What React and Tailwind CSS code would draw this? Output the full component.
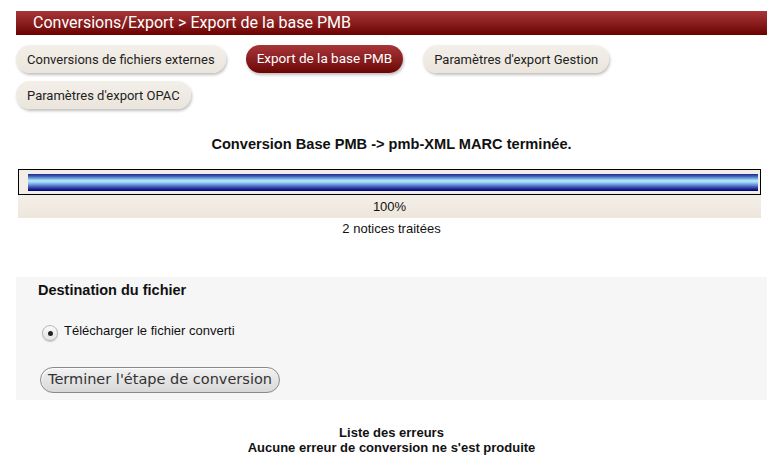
export default function App() {
  const tabBase =
    "h-[28px] rounded-full leading-none flex items-center shadow-[1px_2px_3px_rgba(0,0,0,0.25)]";
  const inactive = `${tabBase} px-[11px] text-[13px] bg-gradient-to-b from-[#f3efe9] to-[#ebe5dc] text-[#222]`;
  const active = `${tabBase} px-[11px] text-[13.5px] bg-gradient-to-b from-[#a7353a] to-[#6d0404] text-white`;
  return (
    <div className="w-[783px] h-[466px] bg-white font-['Liberation_Sans',Arial,sans-serif] text-[#111] overflow-hidden">
      <div className="mx-[16px] pt-[11px]">
        <div className="h-[24px] bg-gradient-to-b from-[#a83538] to-[#6b0000] flex items-center pl-[17px] text-white text-[16px] font-['Roboto',sans-serif]">
          Conversions/Export &gt; Export de la base PMB
        </div>
        <div className="flex flex-wrap gap-x-[20px] gap-y-[8px] mt-[10px] font-['Roboto',sans-serif] w-[746px]">
          <div className={inactive}>Conversions de fichiers externes</div>
          <div className={active}>Export de la base PMB</div>
          <div className={inactive}>Paramètres d'export Gestion</div>
          <div className={inactive}>Paramètres d'export OPAC</div>
        </div>
      </div>

      <div className="mt-[27px] text-center font-bold text-[14.6px] leading-[17px]">
        Conversion Base PMB -&gt; pmb-XML MARC terminée.
      </div>

      <div className="mx-[18px] w-[743px] mt-[16px]">
        <div className="h-[26px] border border-black bg-[#f2ede6] flex items-center pl-[9px] pr-[2px]">
          <div className="h-[17px] flex-1 bg-[linear-gradient(to_bottom,#1c2c8c_0%,#3c58b4_12%,#7ab0e4_28%,#b4ecf8_40%,#9cd0f0_50%,#6890d8_64%,#3850b0_78%,#14208c_90%,#000070_100%)]" />
        </div>
        <div className="h-[23px] bg-gradient-to-b from-[#f4efe8] to-[#ede6dd] flex items-center justify-center text-[13px]">
          100%
        </div>
      </div>
      <div className="text-center text-[13px] mt-[3px] leading-[15px]">2 notices traitées</div>

      <div className="mx-[16px] mt-[41px] h-[123px] bg-[#f6f6f6] pl-[22px] pt-[5px]">
        <div className="font-bold text-[14.5px] leading-[17px]">Destination du fichier</div>
        <div className="flex items-center mt-[26px] ml-[4px]">
          <div className="w-[16px] h-[16px] rounded-full border border-[#b8b8b8] bg-gradient-to-b from-[#fafafa] to-[#e4e4e4] shadow-[0_1px_1px_rgba(0,0,0,0.2)] flex items-center justify-center">
            <div className="w-[5px] h-[5px] rounded-full bg-[#222]" />
          </div>
          <span className="ml-[6px] text-[13px] leading-[14px] -mt-[4px]">Télécharger le fichier converti</span>
        </div>
        <div className="mt-[26px] ml-[2px] w-[240px] h-[26px] rounded-full border border-[#8a8a8a] bg-gradient-to-b from-[#f2f2f2] to-[#d8d8d8] shadow-[inset_1px_1px_1px_rgba(255,255,255,0.8)] flex items-center justify-center text-[14.5px] text-[#333] font-['DejaVu_Sans',sans-serif]">
          Terminer l'étape de conversion
        </div>
      </div>

      <div className="mt-[25px] text-center font-bold text-[13px] leading-[15px]">
        <div>Liste des erreurs</div>
        <div>Aucune erreur de conversion ne s'est produite</div>
      </div>
    </div>
  );
}
